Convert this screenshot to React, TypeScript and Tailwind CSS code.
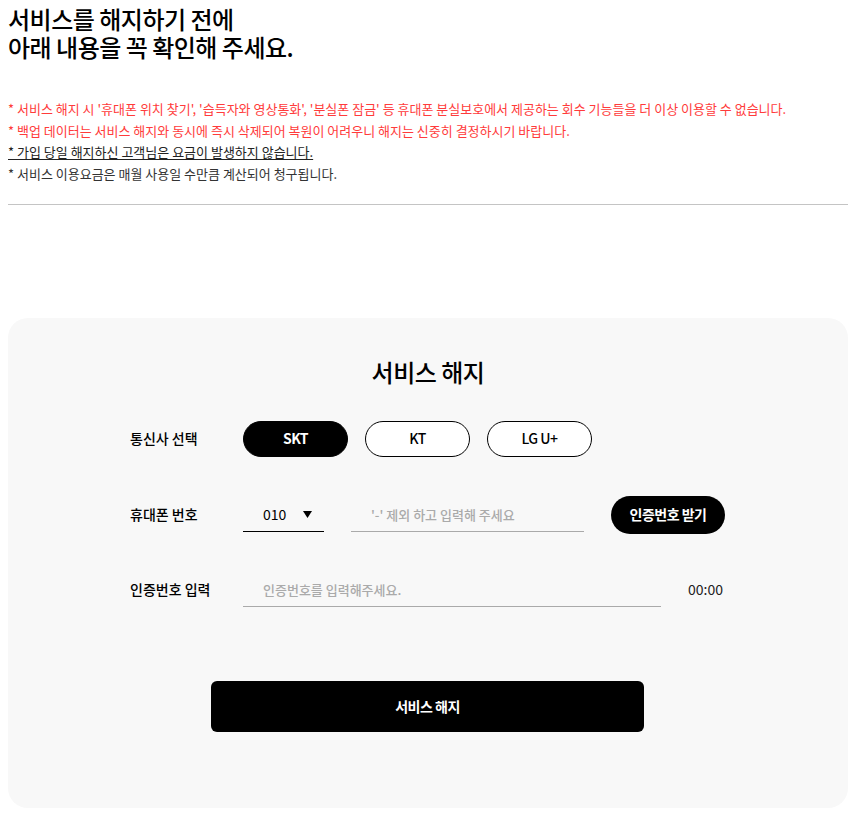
import { useState } from 'react'

const notes = [
  { text: "* 서비스 해지 시 '휴대폰 위치 찾기', '습득자와 영상통화', '분실폰 잠금' 등 휴대폰 분실보호에서 제공하는 회수 기능들을 더 이상 이용할 수 없습니다.", className: 'text-[#ff3b3b]' },
  { text: '* 백업 데이터는 서비스 해지와 동시에 즉시 삭제되어 복원이 어려우니 해지는 신중히 결정하시기 바랍니다.', className: 'text-[#ff3b3b]' },
  { text: '* 가입 당일 해지하신 고객님은 요금이 발생하지 않습니다.', className: 'text-[#222] underline underline-offset-2' },
  { text: '* 서비스 이용요금은 매월 사용일 수만큼 계산되어 청구됩니다.', className: 'text-[#333]' },
]

const carriers = ['SKT', 'KT', 'LG U+']

export default function App() {
  const [carrier, setCarrier] = useState('SKT')

  return (
    <div className="min-h-[817px] bg-white pl-2 pt-[5px] text-black [font-family:'Noto_Sans_CJK_KR','Noto_Sans',sans-serif]">
      <h1 className="text-[24px] font-medium leading-[28px] tracking-[-0.5px]">
        <span className="block">서비스를 해지하기 전에</span>
        <span className="block">아래 내용을 꼭 확인해 주세요.</span>
      </h1>

      <ul className="mt-[37px] text-[13px] leading-[21.7px]">
        {notes.map((n) => (
          <li key={n.text}>
            <span className={n.className}>{n.text}</span>
          </li>
        ))}
      </ul>

      <div className="mt-[19px] h-px w-[840px] bg-[#c4c4c4]" />

      <section className="mt-[113px] h-[490px] w-[840px] rounded-[20px] bg-[#f8f8f8] pt-[37px]">
        <h2 className="text-center text-[24px] font-medium leading-[33px] tracking-[-0.5px]">서비스 해지</h2>

        <div className="ml-[122px] mt-[33px] flex items-center">
          <span className="w-[113px] text-[14px] font-medium">통신사 선택</span>
          <div className="flex gap-[17px]">
            {carriers.map((c) => (
              <button
                key={c}
                onClick={() => setCarrier(c)}
                className={
                  carrier === c
                    ? 'h-9 w-[105px] rounded-full border border-black bg-black text-[14px] font-bold tracking-[-0.5px] text-white'
                    : 'h-9 w-[105px] rounded-full border border-black bg-white text-[14px] font-medium tracking-[-0.5px] text-black'
                }
              >
                {c}
              </button>
            ))}
          </div>
        </div>

        <div className="ml-[122px] mt-[39px] flex items-center">
          <span className="w-[113px] text-[14px] font-medium">휴대폰 번호</span>
          <div className="flex h-[34px] w-[81px] items-center justify-between border-b border-black pl-5 pr-3 text-[14px]">
            <span>010</span>
            <svg width="9" height="7" viewBox="0 0 9 7">
              <path d="M0 0h9L4.5 7z" fill="#000" />
            </svg>
          </div>
          <div className="ml-[27px] flex h-[34px] w-[233px] items-center border-b border-[#aaa] pl-5 text-[13px] font-medium text-[#aaa]">
            '-' 제외 하고 입력해 주세요
          </div>
          <button className="ml-[27px] h-[38px] w-[114px] rounded-full bg-black text-[14px] font-bold tracking-[-0.5px] text-white">
            인증번호 받기
          </button>
        </div>

        <div className="ml-[122px] mt-[39px] flex items-center">
          <span className="w-[113px] text-[14px] font-medium">인증번호 입력</span>
          <div className="flex h-[34px] w-[418px] items-center border-b border-[#aaa] pl-5 text-[13px] font-medium text-[#aaa]">
            인증번호를 입력해주세요.
          </div>
          <span className="ml-[27px] text-[14px] text-[#222]">00:00</span>
        </div>

        <div className="mt-[74px] flex pl-[203px]">
          <button className="h-[51px] w-[433px] rounded-[6px] bg-black text-[14px] font-bold tracking-[-0.5px] text-white">
            서비스 해지
          </button>
        </div>
      </section>
    </div>
  )
}
